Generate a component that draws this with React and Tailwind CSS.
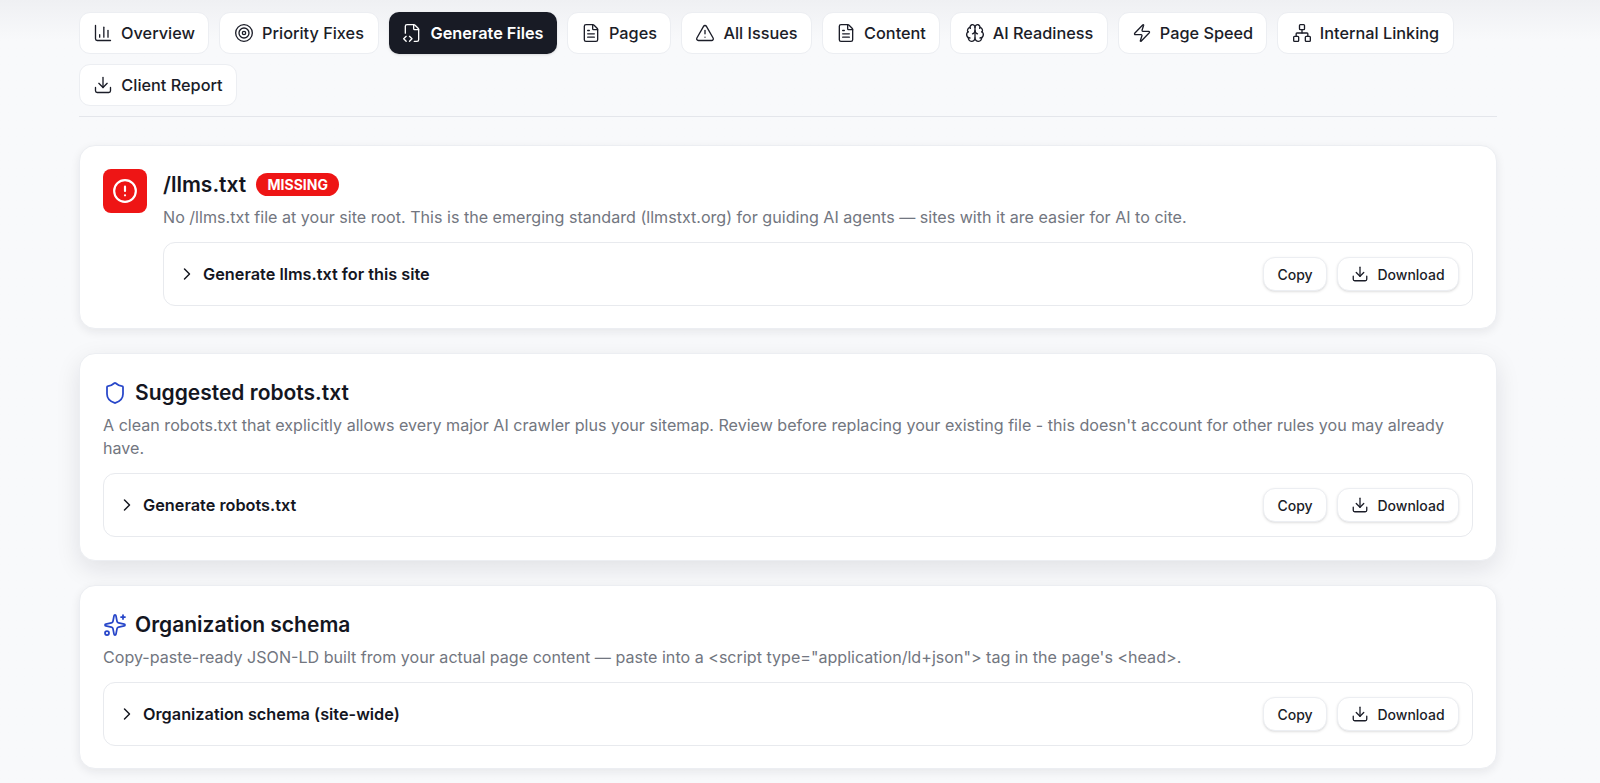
import {
  ChartColumn,
  ChevronRight,
  CircleAlert,
  Brain,
  Download,
  FileCode2,
  FileText,
  Network,
  Shield,
  Sparkles,
  Target,
  TriangleAlert,
  Zap,
} from "lucide-react";

const tabs = [
  { label: "Overview", icon: ChartColumn, width: "w-[130px]" },
  { label: "Priority Fixes", icon: Target, width: "w-[160px]" },
  { label: "Generate Files", icon: FileCode2, width: "w-[168px]", active: true },
  { label: "Pages", icon: FileText, width: "w-[104px]" },
  { label: "All Issues", icon: TriangleAlert, width: "w-[131px]" },
  { label: "Content", icon: FileText, width: "w-[118px]" },
  { label: "AI Readiness", icon: Brain, width: "w-[158px]" },
  { label: "Page Speed", icon: Zap, width: "w-[149px]" },
  { label: "Internal Linking", icon: Network, width: "w-[177px]" },
  { label: "Client Report", icon: Download, width: "w-[158px]" },
];

function Tab({ label, icon: Icon, width, active }) {
  return (
    <button
      className={
        active
          ? `${width} h-[42px] flex items-center justify-center gap-2 rounded-[10px] bg-[#181b25] text-white font-semibold text-[16.3px] shadow-sm`
          : `${width} h-[42px] flex items-center justify-center gap-2 rounded-[11px] bg-white border border-[#eceef2] text-[#1b1d28] font-medium text-[16.3px]`
      }
    >
      <Icon className="size-5" strokeWidth={1.6} />
      {label}
    </button>
  );
}

function GeneratedFile({ label }) {
  return (
    <div className="h-[64px] flex items-center justify-between pl-[13px] pr-[13px] rounded-xl border border-[#e8eaee] bg-white">
      <div className="flex items-center gap-1.5 text-[16.3px] font-semibold text-[#14161f]">
        <ChevronRight className="size-5" strokeWidth={1.75} />
        {label}
      </div>
      <div className="flex items-center gap-2.5">
        <button className="w-[64px] h-[34px] rounded-xl bg-white border border-[#eceef2] shadow-sm text-[14px] font-medium text-[#1b1d28]">
          Copy
        </button>
        <button className="w-[122px] h-[34px] flex items-center justify-center gap-2 rounded-xl bg-white border border-[#eceef2] shadow-sm text-[14px] font-medium text-[#1b1d28]">
          <Download className="size-[18px]" strokeWidth={1.75} />
          Download
        </button>
      </div>
    </div>
  );
}

function Card({ children, className }) {
  return (
    <section
      className={`rounded-2xl bg-white border border-[#eceef2] p-[23px] ${className}`}
    >
      {children}
    </section>
  );
}

export default function App() {
  return (
    <main
      className="min-h-screen h-[783px] overflow-hidden bg-gradient-to-b from-[#eff0f3] to-[#f8f9fb] to-[40px] pl-[79px] pt-3"
      style={{ fontFamily: "Inter, 'Liberation Sans', sans-serif" }}
    >
      <div className="w-[1418px]">
        {/* tabs */}
        <nav className="flex flex-wrap gap-2.5 pb-2.5 border-b border-[#e4e6eb]">
          {tabs.map((t) => (
            <Tab key={t.label} {...t} />
          ))}
        </nav>

        <div className="mt-[28px] flex flex-col gap-6">
          {/* llms.txt */}
          <Card className="h-[184px] flex gap-4 shadow-[0_3px_10px_rgba(20,24,40,0.08)]">
            <div className="size-11 shrink-0 rounded-lg bg-[#ee1515] flex items-center justify-center text-white">
              <CircleAlert className="size-[26px]" strokeWidth={2} />
            </div>
            <div className="flex-1">
              <div className="flex items-center gap-2.5 h-[31px]">
                <h2 className="text-[21px] font-semibold text-[#14161f]">/llms.txt</h2>
                <span className="h-[23px] w-[83px] flex items-center justify-center rounded-full bg-[#ee1515] text-white text-[14px] font-bold">
                  MISSING
                </span>
              </div>
              <p className="mt-[6px] text-[16.1px] leading-[23px] text-[#727680]">
                No /llms.txt file at your site root. This is the emerging standard (llmstxt.org) for guiding AI agents — sites with it are easier for AI to cite.
              </p>
              <div className="mt-[13px]">
                <GeneratedFile label="Generate llms.txt for this site" />
              </div>
            </div>
          </Card>

          {/* robots.txt */}
          <Card className="h-[208px] shadow-[0_8px_24px_rgba(20,24,40,0.1)]">
            <div className="flex items-center gap-2 h-[32px]">
              <Shield className="size-6 text-[#2746c9]" strokeWidth={1.75} />
              <h2 className="text-[21px] font-semibold text-[#14161f]">Suggested robots.txt</h2>
            </div>
            <p className="mt-[5px] text-[16.1px] leading-[23px] text-[#727680]">
              A clean robots.txt that explicitly allows every major AI crawler plus your sitemap. Review before replacing your existing file - this doesn't account for other rules you may already have.
            </p>
            <div className="mt-[13px]">
              <GeneratedFile label="Generate robots.txt" />
            </div>
          </Card>

          {/* organization schema */}
          <Card className="h-[184px] shadow-[0_3px_10px_rgba(20,24,40,0.08)]">
            <div className="flex items-center gap-2 h-[32px]">
              <Sparkles className="size-6 text-[#2746c9]" strokeWidth={1.75} />
              <h2 className="text-[21px] font-semibold text-[#14161f]">Organization schema</h2>
            </div>
            <p className="mt-[5px] text-[16.1px] leading-[23px] text-[#727680]">
              Copy-paste-ready JSON-LD built from your actual page content — paste into a &lt;script type="application/ld+json"&gt; tag in the page's &lt;head&gt;.
            </p>
            <div className="mt-[13px]">
              <GeneratedFile label="Organization schema (site-wide)" />
            </div>
          </Card>
        </div>
      </div>
    </main>
  );
}
